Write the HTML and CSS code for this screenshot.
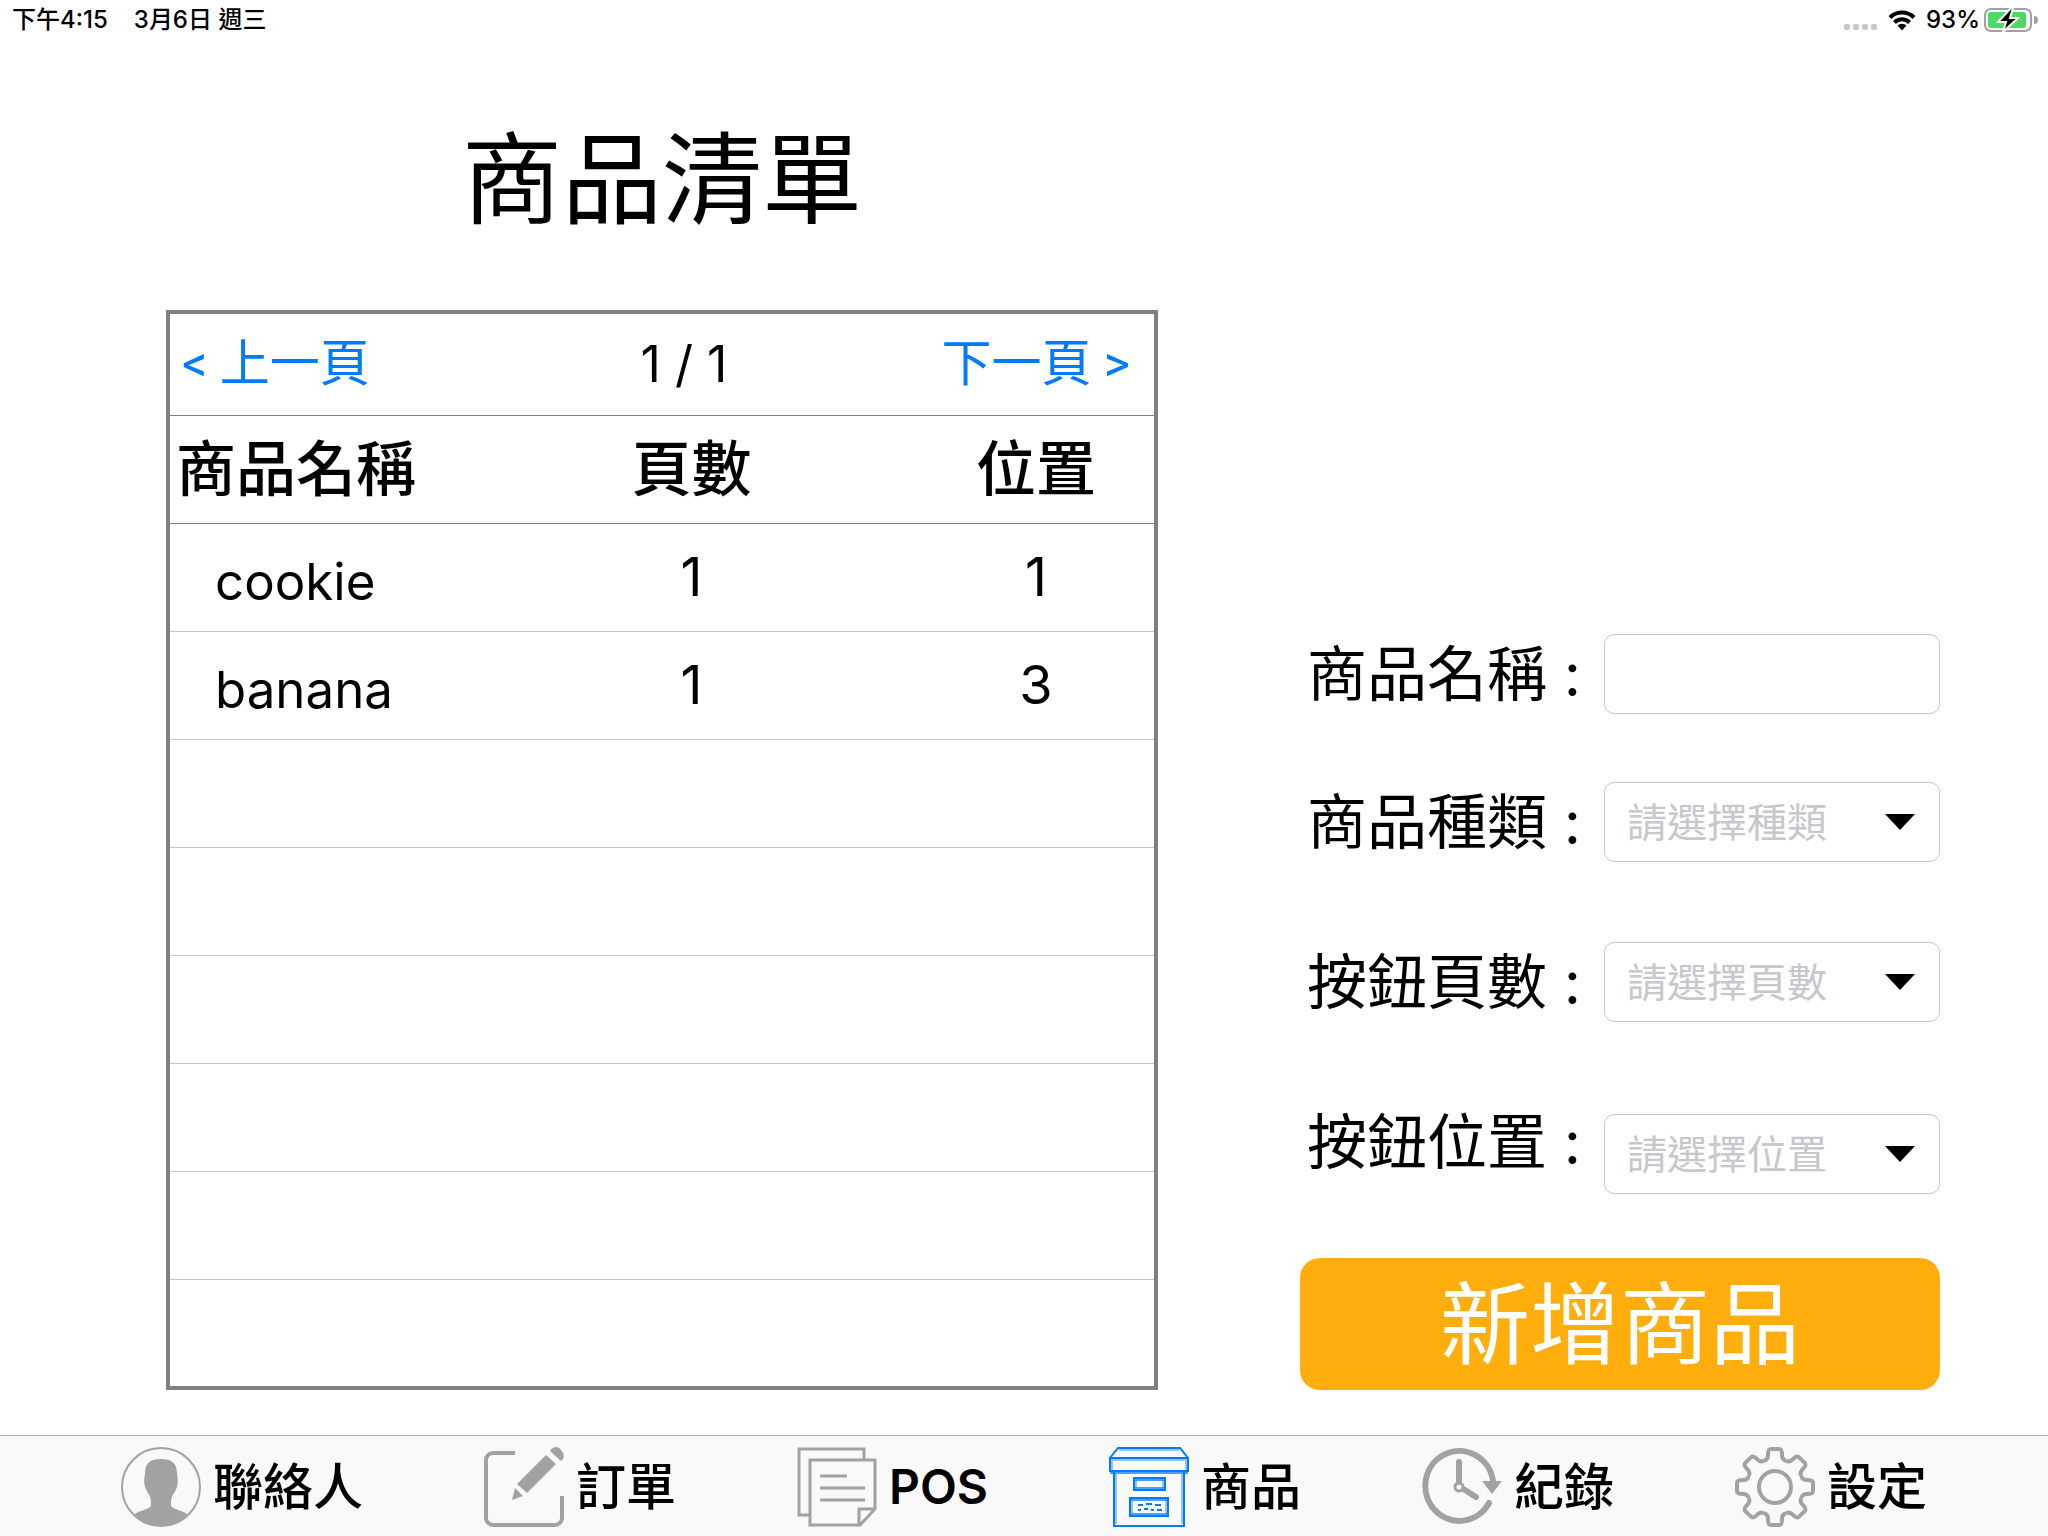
FILE: index.html
```html
<!DOCTYPE html>
<html lang="zh-Hant">
<head>
<meta charset="utf-8">
<meta name="viewport" content="width=device-width, initial-scale=1">
<title>商品清單</title>
<link rel="stylesheet" href="styles.css">
</head>
<body>
<header class="status">
  <div class="status-group status-time"><span>下午4:15</span><span>3月6日 週三</span></div>
  <div class="status-group">
    <svg class="signal" viewBox="0 0 34 24" aria-hidden="true"><g fill="#c8c8c8"><rect x="0" y="16" width="6" height="6" rx="2"/><rect x="9" y="16" width="6" height="6" rx="2"/><rect x="18" y="16" width="6" height="6" rx="2"/><rect x="27" y="16" width="6" height="6" rx="2"/></g></svg>
    <svg class="wifi" viewBox="0 0 28 24" aria-hidden="true"><g fill="none" stroke="#000" stroke-width="4"><path d="M2 9.500A17 17 0 0 1 26 9.500"/><path d="M6.500 14.500A10.500 10.500 0 0 1 21.500 14.500"/></g><path d="M9.500 17.500a6.500 6.500 0 0 1 9 0L14 22.500z"/></svg>
    <div class="status-group status-power">
      <span>93%</span>
      <svg class="battery" viewBox="0 0 54 24" aria-hidden="true"><rect x="1" y="1" width="46" height="22" rx="6" fill="#fff" stroke="#a0a0a0" stroke-width="2"/><rect x="4" y="4" width="38" height="16" rx="3" fill="#4cd964"/><path d="M50 8a4 4 0 0 1 0 8z" fill="#a0a0a0"/><path d="M27 0L14 14h8l-3 10L34 10h-8l3-10z" fill="#000" stroke="#fff" stroke-width="2"/></svg>
    </div>
  </div>
</header>

<main class="content">
  <section class="list">
    <h1 class="title">商品清單</h1>
    <div class="panel">
      <nav class="pager" aria-label="分頁">
        <button type="button" class="pager-button">&lt; 上一頁</button>
        <span class="pager-count">1 / 1</span>
        <button type="button" class="pager-button pager-next">下一頁 &gt;</button>
      </nav>
      <table class="products">
        <colgroup><col class="col-name"><col class="col-page"><col class="col-slot"></colgroup>
        <thead><tr><th class="name-head">商品名稱</th><th>頁數</th><th>位置</th></tr></thead>
        <tbody>
          <tr><td class="name">cookie</td><td>1</td><td>1</td></tr>
          <tr><td class="name">banana</td><td>1</td><td>3</td></tr>
          <tr><td></td><td></td><td></td></tr>
          <tr><td></td><td></td><td></td></tr>
          <tr><td></td><td></td><td></td></tr>
          <tr><td></td><td></td><td></td></tr>
          <tr><td></td><td></td><td></td></tr>
          <tr><td></td><td></td><td></td></tr>
        </tbody>
      </table>
    </div>
  </section>

  <form class="form">
    <div class="row row-name"><label for="name">商品名稱 :</label><input id="name" class="control" type="text"></div>
    <div class="row row-kind"><label for="kind">商品種類 :</label><div class="picker"><select id="kind" class="control"><option>請選擇種類</option></select><svg class="caret" viewBox="0 0 30 16" aria-hidden="true"><path d="M0 0h30L15 16z"/></svg></div></div>
    <div class="row row-page"><label for="page">按鈕頁數 :</label><div class="picker"><select id="page" class="control"><option>請選擇頁數</option></select><svg class="caret" viewBox="0 0 30 16" aria-hidden="true"><path d="M0 0h30L15 16z"/></svg></div></div>
    <div class="row row-slot"><label for="slot">按鈕位置 :</label><div class="picker"><select id="slot" class="control"><option>請選擇位置</option></select><svg class="caret" viewBox="0 0 30 16" aria-hidden="true"><path d="M0 0h30L15 16z"/></svg></div></div>
    <button type="button" class="submit">新增商品</button>
  </form>
</main>

<nav class="tabs" aria-label="主選單">
  <a class="tab" href="#contacts">
    <svg class="tab-icon" viewBox="0 0 80 80" aria-hidden="true"><circle cx="40" cy="40" r="39" fill="none" stroke="currentColor" stroke-width="2"/><path fill="currentColor" d="M24 27C24 16 29 12 40 12s16 4 16 15c2 9 0 15-3 19-3 4-3 8-3 13 3 4 12 4 17 9A39 39 0 0 1 13 68c5-5 14-5 17-9 0-5 0-9-3-13-3-4-5-10-3-19z"/></svg>
    <span>聯絡人</span></a>
  <a class="tab" href="#orders">
    <svg class="tab-icon" viewBox="0 0 80 80" aria-hidden="true"><path fill="none" stroke="currentColor" stroke-width="4" d="M31 6H9a7 7 0 0 0-7 7v58a7 7 0 0 0 7 7h62a7 7 0 0 0 7-7V49"/><g fill="currentColor"><path d="M62 8l10 9-29 29-10-9zM31 41l8 8-11 4zM66 4c4-6 9-4 11-1s4 5 2 9l-2 2z"/></g></svg>
    <span>訂單</span></a>
  <a class="tab" href="#pos">
    <svg class="tab-icon" viewBox="0 0 80 80" aria-hidden="true"><g fill="none" stroke="currentColor" stroke-width="3"><path d="M67 12V2H2v66h11M13 13h65v49L63 78H13zM62 78V62h16M23 29h27M23 41h45M23 53h45"/></g></svg>
    <span class="latin">POS</span></a>
  <a class="tab tab-active" href="#products" aria-current="page">
    <svg class="tab-icon" viewBox="0 0 80 80" aria-hidden="true"><g fill="none" stroke="currentColor" stroke-width="2"><path d="M1 11L9 1h62l8 10v13H1zM1 11h78M5 25v54h70V25M25 31h31v12H25zM21 51h38v18H21z"/><path stroke-opacity=".4" d="M10 3h60M3 13h74M7 27v50M73 27v50M3 12v11M77 12v11M27 33v8M54 33v8M23 53v14M57 53v14"/><path stroke-opacity=".7" d="M1 26h78M21 53h38M25 33h31M25 41h31M21 67h38"/><path d="M29 58h5m3-1h6m3 1h6M29 63h3m3-1h4m3 1h3m3 0h5"/></g></svg>
    <span>商品</span></a>
  <a class="tab" href="#history">
    <svg class="tab-icon" viewBox="0 0 80 80" aria-hidden="true"><g fill="none" stroke="currentColor"><path stroke-width="6" stroke-linecap="round" d="M67 56A34 35 0 1 1 71 34"/><path stroke-width="6" stroke-linecap="round" d="M37 15v20M43 43l11 7"/><circle cx="37" cy="40" r="4" stroke-width="3"/></g><path fill="currentColor" d="M60 34h20L70 47z"/></svg>
    <span>紀錄</span></a>
  <a class="tab" href="#settings">
    <svg class="tab-icon" viewBox="0 0 80 80" aria-hidden="true"><g fill="none" stroke="currentColor" stroke-width="4"><g id="half"><g id="quarter"><path id="tooth" d="M29 13.400C32 13 33 11 33 8c0-5 1-6 3-6h8c2 0 3 1 3 6 0 3 1 5 4 5.400"/><use href="#tooth" transform="rotate(45 40 40)"/></g><use href="#quarter" transform="rotate(90 40 40)"/></g><use href="#half" transform="rotate(180 40 40)"/><circle cx="40" cy="40" r="16"/></g></svg>
    <span>設定</span></a>
</nav>
</body>
</html>
```
FILE: styles.css
```css
* { box-sizing: border-box; }

body {
  margin: 0;
  min-height: 100vh;
  display: flex;
  flex-direction: column;
  background: #fff;
  color: #000;
  font-family: Inter, "Noto Sans CJK TC", sans-serif;
}

button, input, select { font: inherit; }

/* Status bar */
.status {
  height: 40px;
  padding: 0 10px 0 12px;
  display: flex;
  justify-content: space-between;
  align-items: center;
  font-size: 24px;
  line-height: 40px;
  font-weight: 500;
}
.status-group { display: flex; align-items: center; gap: 10px; }
.status-time { gap: 26px; }
.status-power { gap: 4px; }
.signal { width: 34px; height: 24px; }
.wifi { width: 28px; height: 24px; }
.battery { width: 54px; height: 24px; }

/* Main area */
.content {
  flex: 1;
  display: grid;
  grid-template-columns: 992fr 640fr;
  column-gap: 142px;
  align-items: end;
  padding: 0 108px 45px 166px;
}

.title {
  margin: 0 0 70px;
  font-size: 100px;
  line-height: 120px;
  font-weight: 400;
  text-align: center;
}

.panel { border: 4px solid #808080; }

.pager {
  display: grid;
  grid-template-columns: 288fr 452fr 244fr;
  align-items: center;
  height: 102px;
  padding-bottom: 2px;
  border-bottom: 1px solid #808080;
  font-size: 50px;
  line-height: 60px;
}
.pager-button {
  padding: 0 0 0 12px;
  border: 0;
  background: none;
  color: #007aff;
  font-family: Roboto, "Noto Sans CJK TC", sans-serif;
  text-align: left;
  white-space: nowrap;
}
.pager-next { padding: 0 24px 0 0; text-align: right; }
.pager-count { text-align: center; }

.products {
  width: 100%;
  table-layout: fixed;
  border-collapse: separate;
  border-spacing: 0;
}
.col-name { width: 30%; }
.col-page { width: 46%; }
.col-slot { width: 24%; }
.products th {
  height: 108px;
  padding: 0 0 2px;
  border-bottom: 1px solid #808080;
  font-size: 60px;
  line-height: 72px;
  font-weight: 500;
  white-space: nowrap;
}
.products td {
  height: 108px;
  padding: 0 0 2px;
  border-bottom: 1px solid #c8c8c8;
  font-size: 54px;
  line-height: 64px;
  text-align: center;
}
.products tr:last-child td { height: 106px; border-bottom: 0; }
.products .name-head { padding-left: 6px; text-align: left; }
.products .name { padding: 8px 0 0 45px; font-size: 51px; text-align: left; }

/* Form */
.row {
  display: grid;
  grid-template-columns: 1fr 336px;
  align-items: center;
}
.row label {
  padding-left: 7px;
  font-size: 60px;
  line-height: 56px;
  white-space: nowrap;
}
.row-name { margin-bottom: 68px; }
.row-kind { margin-bottom: 80px; }
.row-page { margin-bottom: 92px; }
.row-slot { margin-bottom: 64px; align-items: start; }

.control {
  display: block;
  width: 100%;
  height: 80px;
  padding: 0 22px;
  border: 1px solid #c8c8c8;
  border-radius: 10px;
  background: #fff;
  color: #000;
  font-size: 40px;
}
select.control { appearance: none; color: #c7c7cd; }
.picker { position: relative; }
.caret {
  position: absolute;
  right: 25px;
  top: 32px;
  width: 30px;
  height: 16px;
  pointer-events: none;
}

.submit {
  display: block;
  width: 100%;
  height: 132px;
  padding: 2px 0 0;
  border: 0;
  border-radius: 20px;
  background: #ffae0d;
  color: #fff;
  font-size: 90px;
  line-height: 130px;
}

/* Tab bar */
.tabs {
  display: flex;
  justify-content: space-evenly;
  align-items: center;
  height: 101px;
  padding-top: 2px;
  border-top: 1px solid #b2b2b2;
  background: #f9f9f9;
}
.tab {
  display: flex;
  align-items: center;
  gap: 12px;
  color: #000;
  font-size: 50px;
  line-height: 60px;
  font-weight: 500;
  text-decoration: none;
}
.latin { font-size: 48px; font-weight: 600; }
.tab-icon { width: 80px; height: 80px; color: #a2a2a2; }
.tab-active .tab-icon { color: #007aff; }
```
